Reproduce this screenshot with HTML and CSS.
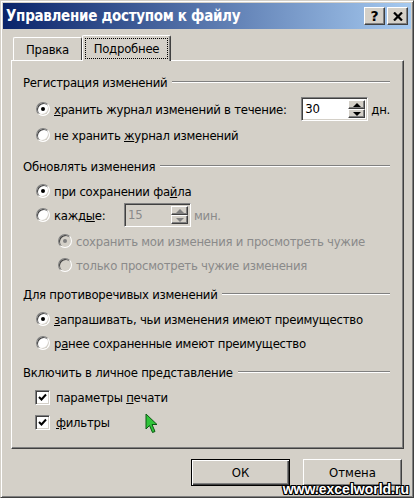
FILE: index.html
```html
<!DOCTYPE html>
<html lang="ru">
<head>
    <meta charset="UTF-8">
    <title>Управление доступом к файлу</title>
    <link rel="stylesheet" href="styles.css">
</head>
<body>

<div class="window">
    <div class="titlebar">
        <span class="title">Управление доступом к файлу</span>
        <div class="title-btns">
            <span class="tbtn help">?</span>
            <span class="tbtn">
                <svg width="10" height="9" viewBox="0 0 10 9"><path d="M1 0.5 L9 8.5 M9 0.5 L1 8.5" stroke="#000" stroke-width="2.2"/></svg>
            </span>
        </div>
    </div>

    <div class="tabs">
        <div class="tab">Правка</div>
        <div class="tab selected"><span class="focus">Подробнее</span></div>
    </div>

    <div class="panel">
        <div class="group">
            <div class="legend"><span>Регистрация изменений</span><i></i></div>
            <div class="opt opt-tall">
                <span class="radio checked"></span>
                <span><u>х</u>ранить журнал изменений в течение:</span>
                <span class="spin spin-right">
                    <span class="spin-val">30</span>
                    <span class="spin-btns"><span class="sbtn up"></span><span class="sbtn down"></span></span>
                </span>
                <span class="unit"><u>д</u>н.</span>
            </div>
            <div class="opt">
                <span class="radio"></span>
                <span>не хранить <u>ж</u>урнал изменений</span>
            </div>
        </div>

        <div class="group group-update">
            <div class="legend"><span>Обновлять изменения</span><i></i></div>
            <div class="opt">
                <span class="radio checked"></span>
                <span>при сохранении фа<u>й</u>ла</span>
            </div>
            <div class="opt">
                <span class="radio"></span>
                <span class="opt-label">кажд<u>ы</u>е:</span>
                <span class="spin disabled">
                    <span class="spin-val">15</span>
                    <span class="spin-btns"><span class="sbtn up"></span><span class="sbtn down"></span></span>
                </span>
                <span class="unit disabled-text">мин.</span>
            </div>
            <div class="sub">
                <div class="opt">
                    <span class="radio checked disabled"></span>
                    <span class="disabled-text">сохранить мои изменения и просмотреть чужие</span>
                </div>
                <div class="opt">
                    <span class="radio disabled"></span>
                    <span class="disabled-text">только просмотреть чужие изменения</span>
                </div>
            </div>
        </div>

        <div class="group">
            <div class="legend"><span>Для противоречивых изменений</span><i></i></div>
            <div class="opt">
                <span class="radio checked"></span>
                <span><u>з</u>апрашивать, чьи изменения имеют преимущество</span>
            </div>
            <div class="opt">
                <span class="radio"></span>
                <span>р<u>а</u>нее сохраненные имеют преимущество</span>
            </div>
        </div>

        <div class="group">
            <div class="legend"><span>Включить в личное представление</span><i></i></div>
            <div class="opt opt-check">
                <span class="check"><svg width="9" height="9" viewBox="0 0 9 9"><path d="M1 4 L3.5 6.5 L8 1.5" fill="none" stroke="#000" stroke-width="2"/></svg></span>
                <span>параметры <u>п</u>ечати</span>
            </div>
            <div class="opt opt-check">
                <span class="check"><svg width="9" height="9" viewBox="0 0 9 9"><path d="M1 4 L3.5 6.5 L8 1.5" fill="none" stroke="#000" stroke-width="2"/></svg></span>
                <span><u>ф</u>ильтры</span>
            </div>
        </div>
    </div>

    <div class="buttons">
        <button class="btn default">ОК</button>
        <button class="btn">Отмена</button>
    </div>

    <svg class="cursor" width="13" height="21" viewBox="0 0 13 21">
        <path d="M1 1 L1 16 L4.5 12.5 L7.5 19.5 L10 18.5 L7 11.5 L12 11.5 Z" fill="#2fc43a" stroke="#0b5a12" stroke-width="1"/>
    </svg>

    <div class="watermark">www.excelworld.ru</div>
</div>

</body>
</html>
```

FILE: styles.css
```css
body {
    margin: 0;
    background-color: #d4d0c8;
    font-family: "DejaVu Sans Condensed", "DejaVu Sans", sans-serif;
    font-size: 13px;
    letter-spacing: -0.25px;
    color: #000;
}
.window {
    position: relative;
    width: 414px;
    height: 498px;
    box-sizing: border-box;
    border: 1px solid;
    border-color: #d4d0c8 #404040 #404040 #d4d0c8;
    box-shadow: inset 1px 1px #fff, inset -1px -1px #808080;
    padding: 2px;
    display: flex;
    flex-direction: column;
    overflow: hidden;
}
.titlebar {
    height: 26px;
    background: linear-gradient(to right, #0a246a, #a6caf0);
    display: flex;
    align-items: center;
    padding: 0 3px 0 3px;
}
.title {
    flex: 1;
    color: #fff;
    font-weight: bold;
    font-size: 15px;
    letter-spacing: -0.3px;
}
.title-btns {
    display: flex;
    gap: 2px;
}
.tbtn {
    width: 21px;
    height: 18px;
    box-sizing: border-box;
    background-color: #d4d0c8;
    border: 1px solid;
    border-color: #fff #404040 #404040 #fff;
    box-shadow: inset -1px -1px #808080;
    display: flex;
    align-items: center;
    justify-content: center;
    font-family: "DejaVu Sans", sans-serif;
    font-weight: bold;
    font-size: 14px;
    line-height: 1;
}

/* tabs */
.tabs {
    display: flex;
    align-items: flex-end;
    height: 25px;
    margin-top: 6px;
    padding-left: 10px;
}
.tab {
    height: 23px;
    width: 69px;
    box-sizing: border-box;
    border-top: 1px solid #fff;
    border-left: 1px solid #fff;
    border-right: 1px solid #404040;
    border-radius: 2px 2px 0 0;
    display: flex;
    align-items: center;
    justify-content: center;
}
.tab.selected {
    position: relative;
    z-index: 1;
    width: 89px;
    height: 26px;
    margin-bottom: -1px;
    background-color: #d4d0c8;
    box-shadow: inset -1px 0 #808080;
}
.focus {
    outline: 1px dotted #000;
    padding: 2px 8px;
}

/* panel */
.panel {
    height: 389px;
    box-sizing: border-box;
    margin: 0 7px 0 8px;
    border: 1px solid;
    border-color: #fff #404040 #404040 #fff;
    box-shadow: inset -1px -1px #808080;
    padding: 11px 13px 0 11px;
}
.group + .group {
    margin-top: 7px;
}
.group.group-update {
    margin-top: 9px;
}
.legend {
    display: flex;
    align-items: center;
    height: 20px;
    margin-bottom: 3px;
}
.legend i {
    flex: 1;
    margin-left: 5px;
    border-top: 1px solid #808080;
    border-bottom: 1px solid #fff;
}
.opt {
    display: flex;
    align-items: center;
    height: 24px;
    padding-left: 13px;
}
.opt-tall {
    height: 28px;
}
.opt-check {
    height: 25px;
    padding-left: 12px;
}
.opt-label {
    width: 70px;
}
.sub {
    margin-top: 2px;
    padding-left: 22px;
}
.radio {
    flex: none;
    position: relative;
    width: 12px;
    height: 12px;
    margin-right: 4px;
    border-radius: 50%;
    background-color: #fff;
    border: 1px solid;
    border-color: #808080 #fff #fff #808080;
    box-shadow: inset 1px 1px #404040, inset -1px -1px #d4d0c8;
}
.radio.checked::after {
    content: "";
    position: absolute;
    left: 4px;
    top: 4px;
    width: 4px;
    height: 4px;
    border-radius: 50%;
    background-color: #000;
}
.radio.disabled {
    background-color: #d4d0c8;
}
.radio.disabled::after {
    background-color: #808080;
}
.check {
    flex: none;
    width: 13px;
    height: 13px;
    margin-right: 6px;
    background-color: #fff;
    border: 1px solid;
    border-color: #808080 #fff #fff #808080;
    box-shadow: inset 1px 1px #404040, inset -1px -1px #d4d0c8;
    display: flex;
    align-items: center;
    justify-content: center;
}
.disabled-text {
    color: #8a8a8a;
}

/* spin boxes */
.spin {
    display: flex;
    width: 67px;
    height: 24px;
    box-sizing: border-box;
    padding: 2px;
    background-color: #fff;
    border: 1px solid;
    border-color: #808080 #fff #fff #808080;
    box-shadow: inset 1px 1px #404040, inset -1px -1px #d4d0c8;
}
.spin-right {
    margin-left: auto;
}
.spin.disabled {
    background-color: #d4d0c8;
    color: #8a8a8a;
}
.spin-val {
    flex: 1;
    padding-left: 1px;
    line-height: 18px;
}
.spin-btns {
    display: flex;
    flex-direction: column;
    width: 17px;
}
.sbtn {
    flex: 1;
    background-color: #d4d0c8;
    border: 1px solid;
    border-color: #fff #404040 #404040 #fff;
    box-shadow: inset -1px -1px #808080;
    display: flex;
    align-items: center;
    justify-content: center;
}
.sbtn.up::before {
    content: "";
    border-left: 4px solid transparent;
    border-right: 4px solid transparent;
    border-bottom: 4px solid #000;
}
.sbtn.down::before {
    content: "";
    border-left: 4px solid transparent;
    border-right: 4px solid transparent;
    border-top: 4px solid #000;
}
.spin.disabled .sbtn.up::before {
    border-bottom-color: #808080;
}
.spin.disabled .sbtn.down::before {
    border-top-color: #808080;
}
.unit {
    margin-left: 3px;
}

/* bottom buttons */
.buttons {
    display: flex;
    justify-content: flex-end;
    gap: 13px;
    margin: 10px 9px 0 0;
}
.btn {
    width: 99px;
    height: 27px;
    box-sizing: border-box;
    background-color: #d4d0c8;
    border: 1px solid;
    border-color: #fff #404040 #404040 #fff;
    box-shadow: inset -1px -1px #808080;
    font: inherit;
    color: #000;
    padding: 0;
}
.btn.default {
    border-color: #000;
    box-shadow: inset 1px 1px #fff, inset -1px -1px #404040, inset -2px -2px #808080;
}

/* overlays */
.cursor {
    position: absolute;
    left: 144px;
    top: 412px;
}
.watermark {
    position: absolute;
    right: 4px;
    bottom: 0;
    font-family: "Liberation Sans", sans-serif;
    font-weight: bold;
    font-size: 14px;
    line-height: 16px;
    letter-spacing: 0;
    color: #fff;
    text-shadow: 1px 0 #000, -1px 0 #000, 0 1px #000, 0 -1px #000,
                 1px 1px #000, -1px -1px #000, 1px -1px #000, -1px 1px #000;
}
```
